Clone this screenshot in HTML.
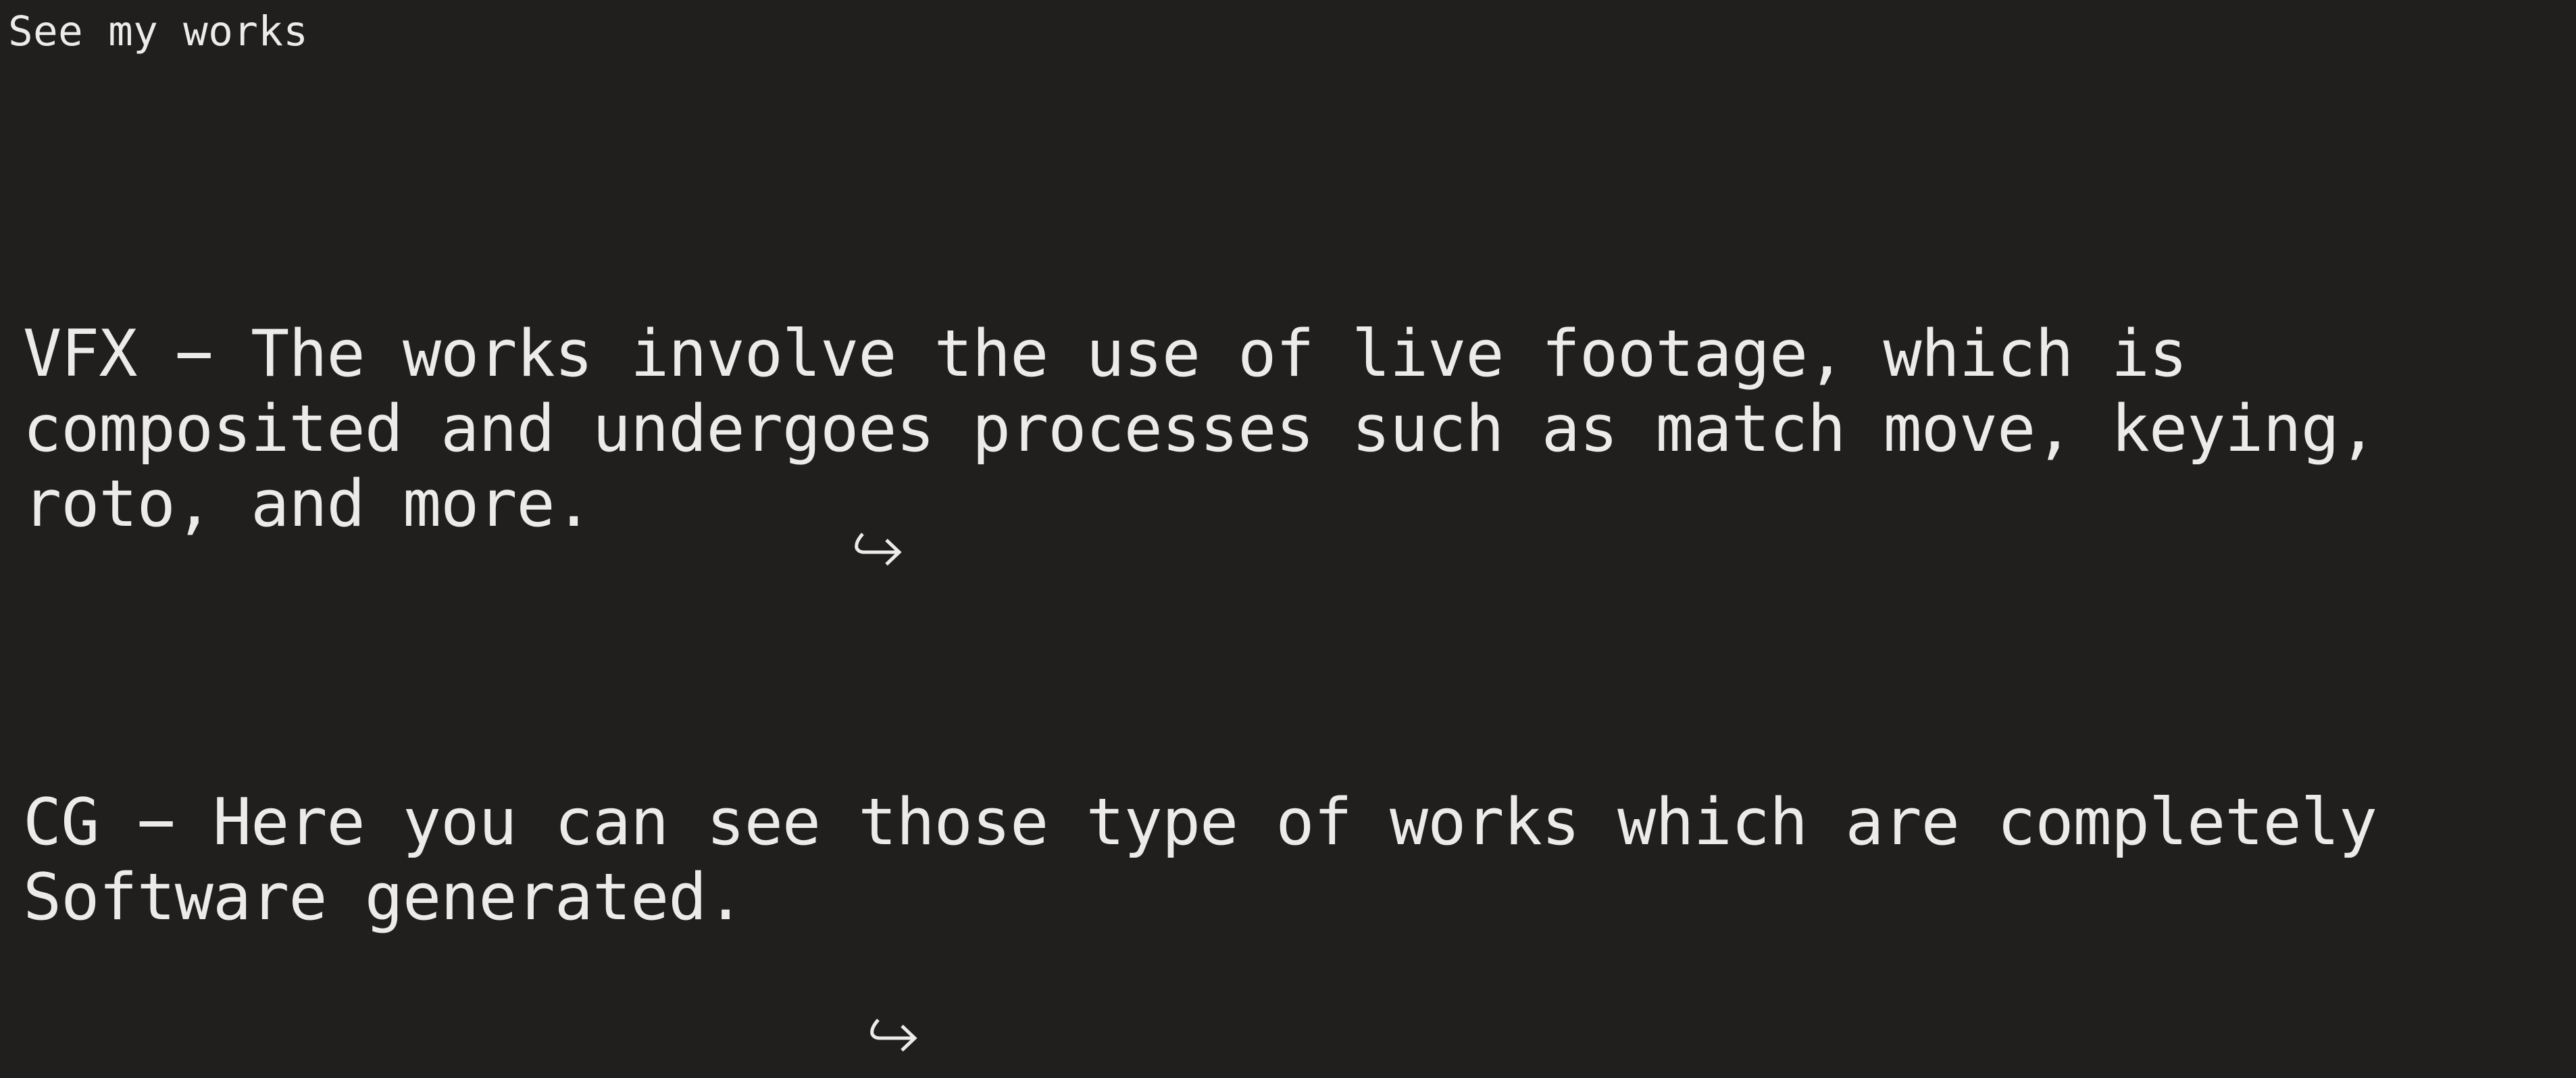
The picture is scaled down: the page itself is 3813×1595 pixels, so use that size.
<!DOCTYPE html>
<html><head><meta charset="utf-8"><style>
html,body{margin:0;padding:0;background:#201f1e;width:3813px;height:1595px;overflow:hidden}
.t{position:absolute;color:#edebe9;font-family:"DejaVu Sans Mono","Liberation Mono",monospace;white-space:pre}
.s{left:12px;top:16px;font-size:61px;line-height:62px;letter-spacing:0.3px}
.b{left:34px;font-size:95px;line-height:111px;letter-spacing:-1px}
svg{position:absolute}
</style></head><body>
<div class="t s">See my works</div>
<div class="t b" style="top:469px">VFX − The works involve the use of live footage, which is
composited and undergoes processes such as match move, keying,
roto, and more.</div>
<div class="t b" style="top:1162px">CG − Here you can see those type of works which are completely
Software generated.</div>
<svg style="left:1265px;top:788px" width="70" height="50" viewBox="0 0 70 50"><path d="M12 2 Q1 14 3 23 Q6 29 14 29 L66 29 M47 11 L66 29 L47 47" fill="none" stroke="#edebe9" stroke-width="5"/></svg>
<svg style="left:1288px;top:1507px" width="70" height="50" viewBox="0 0 70 50"><path d="M12 2 Q1 14 3 23 Q6 29 14 29 L66 29 M47 11 L66 29 L47 47" fill="none" stroke="#edebe9" stroke-width="5"/></svg>
</body></html>
